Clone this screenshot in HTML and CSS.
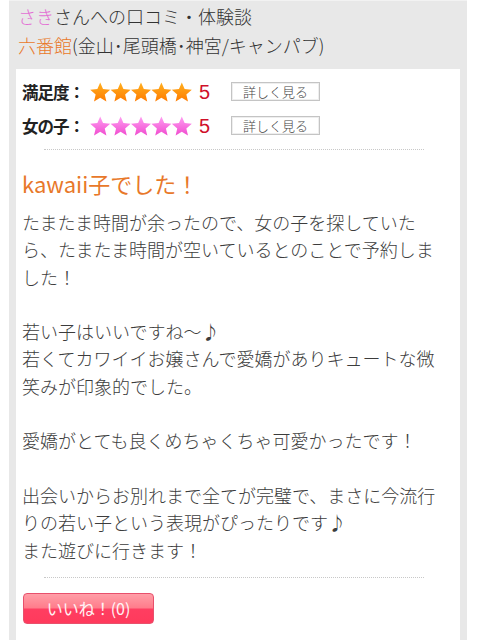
FILE: index.html
```html
<!DOCTYPE html>
<html lang="ja">
<head>
<meta charset="utf-8">
<title>口コミ・体験談</title>
<link rel="stylesheet" href="styles.css">
</head>
<body>
<div class="panel">
  <div class="header">
    <div class="line"><span class="name">さき</span>さんへの口コミ・体験談</div>
    <div class="line"><span class="shop">六番館</span>(金山･尾頭橋･神宮/キャンパブ)</div>
  </div>
  <div class="card">
    <div class="ratings">
      <div class="row">
        <span class="label">満足度：</span>
        <svg class="stars" width="102" height="20" viewBox="0 0 102 20">
          <defs>
            <linearGradient id="gOrange" x1="0" y1="0" x2="0" y2="1">
              <stop offset="0" stop-color="#ffb020"/>
              <stop offset="1" stop-color="#ff7c00"/>
            </linearGradient>
            <path id="star" d="M10.2 0.5 L13.02 7.12 L20.19 7.76 L14.76 12.48 L16.37 19.49 L10.2 15.8 L4.03 19.49 L5.64 12.48 L0.21 7.76 L7.38 7.12 Z"/>
          </defs>
          <g fill="url(#gOrange)">
            <use href="#star" x="0"/>
            <use href="#star" x="20.4"/>
            <use href="#star" x="40.8"/>
            <use href="#star" x="61.2"/>
            <use href="#star" x="81.6"/>
          </g>
        </svg>
        <span class="score">5</span>
        <span class="more">詳しく見る</span>
      </div>
      <div class="row">
        <span class="label">女の子：</span>
        <svg class="stars" width="102" height="20" viewBox="0 0 102 20">
          <defs>
            <linearGradient id="gPink" x1="0" y1="0" x2="0" y2="1">
              <stop offset="0" stop-color="#ff9ef2"/>
              <stop offset="1" stop-color="#f04ccf"/>
            </linearGradient>
          </defs>
          <g fill="url(#gPink)">
            <use href="#star" x="0"/>
            <use href="#star" x="20.4"/>
            <use href="#star" x="40.8"/>
            <use href="#star" x="61.2"/>
            <use href="#star" x="81.6"/>
          </g>
        </svg>
        <span class="score">5</span>
        <span class="more">詳しく見る</span>
      </div>
    </div>
    <div class="sep"></div>
    <h2 class="title">kawaii子でした！</h2>
    <p class="body">たまたま時間が余ったので、女の子を探していたら、たまたま時間が空いているとのことで予約しました！<br><br>若い子はいいですね〜♪<br>若くてカワイイお嬢さんで愛嬌がありキュートな微笑みが印象的でした。<br><br>愛嬌がとても良くめちゃくちゃ可愛かったです！<br><br>出会いからお別れまで全てが完璧で、まさに今流行りの若い子という表現がぴったりです♪<br>また遊びに行きます！</p>
    <div class="sep sep-bottom"></div>
    <div class="like-wrap"><button class="like">いいね！(0)</button></div>
  </div>
</div>
</body>
</html>
```
FILE: styles.css
```css
html, body {
  margin: 0;
  padding: 0;
  background: #ffffff;
}
body {
  font-family: "Noto Sans CJK JP", "Liberation Sans", sans-serif;
  color: #333;
  height: 640px;
  overflow: hidden;
}
.panel {
  margin: 0 13px 0 9px;
  padding: 1px 7px 0 7px;
  background: #e8e8e8;
  border-top: 1px solid #f2f2f2;
  min-height: 700px;
}
.header {
  padding: 0 0 0 2px;
  margin-bottom: 9px;
}
.header .line {
  font-size: 18px;
  line-height: 29px;
  font-weight: 300;
  color: #333;
  white-space: nowrap;
}
.name { color: #e36fd4; }
.shop { color: #e8782a; }
.card {
  background: #fff;
  padding: 6px 14px 0 6px;
  min-height: 600px;
}
.row {
  display: grid;
  grid-template-columns: 68px 102px 39px 89px;
  align-items: center;
  height: 34px;
}
.label {
  font-size: 16.5px;
  font-weight: bold;
  color: #222;
  white-space: nowrap;
  letter-spacing: -1px;
}
.stars { display: block; }
.score {
  font-family: "Liberation Sans", sans-serif;
  font-size: 20px;
  color: #d0102a;
  padding-left: 7px;
}
.more {
  display: block;
  height: 17px;
  line-height: 17px;
  border: 1px solid #c4c4c4;
  box-shadow: inset 0 0 0 1px #eeeeee;
  font-size: 13px;
  font-weight: 300;
  color: #444;
  text-align: center;
  margin-top: -2px;
}
.sep {
  border-top: 1px dotted #c8c8c8;
  margin: 6px 22px 0 22px;
}
.title {
  margin: 18px 0 0 0;
  font-size: 22px;
  line-height: 30px;
  font-weight: 400;
  color: #e8782a;
}
.body {
  margin: 11px 0 0 0;
  font-size: 18px;
  line-height: 27.3px;
  font-weight: 300;
  color: #3c3c3c;
}
.sep-bottom {
  margin-top: 13px;
}
.like-wrap {
  padding: 15px 0 0 1px;
}
.like {
  width: 131px;
  height: 31px;
  border: 1px solid #e8506c;
  border-radius: 4px;
  background: linear-gradient(to bottom, #ff9ea7 0%, #ff7c8b 48%, #ff3e61 52%, #ff3a5c 100%);
  color: #fff2f4;
  font-family: "Noto Sans CJK JP", "Liberation Sans", sans-serif;
  font-size: 16px;
  padding: 0;
  line-height: 28px;
}
```
